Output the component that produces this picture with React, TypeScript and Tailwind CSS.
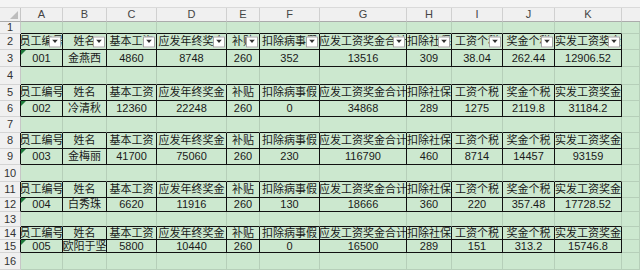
import React from "react";

const colW = [
  "w-[42px]",
  "w-[44px]",
  "w-[50px]",
  "w-[70px]",
  "w-[33px]",
  "w-[60px]",
  "w-[87px]",
  "w-[45px]",
  "w-[51px]",
  "w-[52px]",
  "w-[67px]",
];
const letters = ["A", "B", "C", "D", "E", "F", "G", "H", "I", "J", "K"];

const headers = [
  "员工编号",
  "姓名",
  "基本工资",
  "应发年终奖金",
  "补贴",
  "扣除病事假",
  "应发工资奖金合计",
  "扣除社保",
  "工资个税",
  "奖金个税",
  "实发工资奖金",
];

type RowDef = {
  n: number;
  h: string;
  type: "blank" | "header" | "data";
  top?: boolean;
  filter?: boolean;
  d?: string[];
};

const rows: RowDef[] = [
  { n: 1, h: "h-[12px]", type: "blank", top: true },
  { n: 2, h: "h-[16px]", type: "header", filter: true },
  { n: 3, h: "h-[17px]", type: "data", d: ["001", "金燕西", "4860", "8748", "260", "352", "13516", "309", "38.04", "262.44", "12906.52"] },
  { n: 4, h: "h-[18px]", type: "blank", top: true },
  { n: 5, h: "h-[16px]", type: "header" },
  { n: 6, h: "h-[16px]", type: "data", d: ["002", "冷清秋", "12360", "22248", "260", "0", "34868", "289", "1275", "2119.8", "31184.2"] },
  { n: 7, h: "h-[16px]", type: "blank", top: true },
  { n: 8, h: "h-[16px]", type: "header" },
  { n: 9, h: "h-[16px]", type: "data", d: ["003", "金梅丽", "41700", "75060", "260", "230", "116790", "460", "8714", "14457", "93159"] },
  { n: 10, h: "h-[17px]", type: "blank", top: true },
  { n: 11, h: "h-[16px]", type: "header" },
  { n: 12, h: "h-[14px]", type: "data", d: ["004", "白秀珠", "6620", "11916", "260", "130", "18666", "360", "220", "357.48", "17728.52"] },
  { n: 13, h: "h-[15px]", type: "blank", top: true },
  { n: 14, h: "h-[13px]", type: "header" },
  { n: 15, h: "h-[13px]", type: "data", d: ["005", "欧阳于坚", "5800", "10440", "260", "0", "16500", "289", "151", "313.2", "15746.8"] },
  { n: 16, h: "h-[17px]", type: "blank" },
];

function FilterBtn() {
  return (
    <div className="absolute right-[1px] top-1/2 -translate-y-1/2 w-[12px] h-[11px] bg-white border border-[#a6a6a6] flex items-center justify-center">
      <svg width="6" height="4" viewBox="0 0 6 4">
        <polygon points="0,0 6,0 3,3.5" fill="#333" />
      </svg>
    </div>
  );
}

function GreenTri() {
  return (
    <svg className="absolute left-0 top-0" width="5" height="5" viewBox="0 0 5 5">
      <polygon points="0,0 5,0 0,5" fill="#1e7b3c" />
    </svg>
  );
}

function Row({ r }: { r: RowDef }) {
  const inTable = r.type !== "blank";
  return (
    <div className={`flex ${r.h}`}>
      <div
        className={`w-[21px] shrink-0 bg-[#f0f0f0] border-b border-b-[#d4d4d4] border-r ${
          inTable ? "border-r-[#111111]" : "border-r-[#c6c6c6]"
        } flex items-center justify-center text-[11px] leading-none text-[#333]`}
      >
        {r.n}
      </div>
      {colW.map((w, i) => {
        const bb = r.top || inTable ? "border-b-[#111111]" : "border-b-[#b6cfb9]";
        const br = inTable ? "border-r-[#111111]" : "border-r-[#b6cfb9]";
        let content: React.ReactNode = null;
        if (r.type === "header") content = headers[i];
        if (r.type === "data") content = r.d![i];
        return (
          <div
            key={i}
            className={`${w} shrink-0 relative bg-[#cce8cf] border-r border-b ${br} ${bb} flex items-center justify-center overflow-hidden whitespace-nowrap text-[11px] leading-none text-[#1a1a1a]`}
          >
            <span>{content}</span>
            {r.type === "header" && r.filter && <FilterBtn />}
            {r.type === "data" && i === 0 && <GreenTri />}
          </div>
        );
      })}
      <div className="flex-1 bg-[#cce8cf] border-r border-b border-r-[#b6cfb9] border-b-[#b6cfb9]" />
    </div>
  );
}

export default function App() {
  return (
    <div
      className="w-[640px] h-[270px] overflow-hidden bg-[#cce8cf]"
      style={{ fontFamily: '"Liberation Sans", "Noto Sans CJK SC", sans-serif' }}
    >
      <div className="h-[8px] bg-[#f4f4f4] border-b border-[#dadada]" />
      <div className="flex h-[14px] bg-[#f0f0f0]">
        <div className="w-[21px] shrink-0 relative border-r border-b border-r-[#c6c6c6] border-b-[#ababab]">
          <svg className="absolute right-[2px] bottom-[2px]" width="8" height="8" viewBox="0 0 8 8">
            <polygon points="8,0 8,8 0,8" fill="#bdbdbd" />
          </svg>
        </div>
        {colW.map((w, i) => (
          <div
            key={i}
            className={`${w} shrink-0 border-r border-b border-r-[#d0d0d0] border-b-[#ababab] flex items-center justify-center text-[11px] leading-none text-[#444]`}
          >
            {letters[i]}
          </div>
        ))}
        <div className="flex-1 border-b border-b-[#ababab]" />
      </div>
      {rows.map((r) => (
        <Row key={r.n} r={r} />
      ))}
    </div>
  );
}
